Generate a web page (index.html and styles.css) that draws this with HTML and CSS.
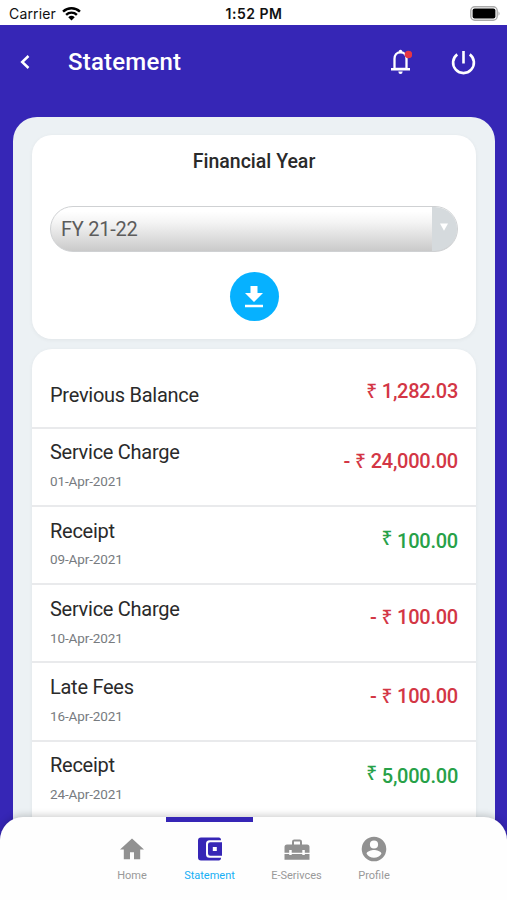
FILE: index.html
```
<!DOCTYPE html>
<html lang="en">
<head>
<meta charset="utf-8">
<title>Statement</title>
<link rel="stylesheet" href="styles.css">
</head>
<body>
<div class="status">
  <div class="carrier"><span>Carrier</span>
    <svg class="wifi" viewBox="0 0 18 14"><path d="M1 5.200a11.600 11.600 0 0 1 16 0M3.900 8.200a7.400 7.400 0 0 1 10.200 0" fill="none" stroke="#000" stroke-width="2.300"/><path d="M5.900 10.500a4.600 4.600 0 0 1 6.200 0L9 13.600z"/></svg>
  </div>
  <div class="time">1:52 PM</div>
  <svg class="battery" viewBox="0 0 31 15"><rect x=".8" y=".8" width="26.400" height="13.400" rx="4" fill="#fff" stroke="#aaa" stroke-width="1.400"/><rect x="2.600" y="2.600" width="22.800" height="9.800" rx="2"/><path d="M28.500 5.200q2.200 2.300 0 4.600z" fill="#aaa"/></svg>
</div>
<header class="header">
  <svg class="back" viewBox="0 0 10 16"><path d="M8.500 2 2.200 8l6.300 6" fill="none" stroke="#fff" stroke-width="2.500"/></svg>
  <h1>Statement</h1>
  <svg class="bell" viewBox="0 0 22 26"><path d="M10.500 3.300c-4 0-6 3-6 6.500v10h12v-10c0-3.500-2-6.500-6-6.500z" fill="none" stroke="#fff" stroke-width="2.300"/><path d="M8.700 3.200V2q1.800-2.700 3.600 0v1.200zM1 19h19v2.400H1zM8.300 22.500h4.400q-.2 2.500-2.200 2.500t-2.200-2.500z" fill="#fff"/><circle cx="18.500" cy="5.500" r="3.800" fill="#e63544"/></svg>
  <svg class="power" viewBox="0 0 24 24"><path d="M6 4.200a10 10 0 1 0 12 0M12 1v12" fill="none" stroke="#fff" stroke-width="2.500"/></svg>
</header>
<main class="sheet">
  <section class="card year">
    <h2>Financial Year</h2>
    <div class="select"><span>FY 21-22</span><div class="arrow"><svg viewBox="0 0 10 9"><path d="M1 .5h8L5 7.800z" fill="#fff"/></svg></div></div>
    <div class="download"><svg viewBox="0 0 18 22"><path d="M5.500 0h7v7H18l-9 9-9-9h5.500zM0 18.700h18v2.600H0z" fill="#fff"/></svg></div>
  </section>
  <section class="card list">
    <div class="row first"><div class="name">Previous Balance</div><div class="amount due"><span class="rs">₹</span>1,282.03</div></div>
    <div class="row"><div><div class="name">Service Charge</div><div class="date">01-Apr-2021</div></div><div class="amount due">-<span class="rs minus">₹</span>24,000.00</div></div>
    <div class="row"><div><div class="name">Receipt</div><div class="date">09-Apr-2021</div></div><div class="amount paid"><span class="rs">₹</span>100.00</div></div>
    <div class="row"><div><div class="name">Service Charge</div><div class="date">10-Apr-2021</div></div><div class="amount due">-<span class="rs minus">₹</span>100.00</div></div>
    <div class="row"><div><div class="name">Late Fees</div><div class="date">16-Apr-2021</div></div><div class="amount due">-<span class="rs minus">₹</span>100.00</div></div>
    <div class="row"><div><div class="name">Receipt</div><div class="date">24-Apr-2021</div></div><div class="amount paid"><span class="rs">₹</span>5,000.00</div></div>
  </section>
</main>
<nav class="nav">
  <div class="tab home"><svg viewBox="0 0 26 26"><path d="M13 2.500 1 13.400h3.800v9.900H11v-7h4v7h6.200v-9.900H25z"/></svg><span>Home</span></div>
  <div class="tab active"><svg viewBox="0 0 26 26"><path d="M4 1.500h17.800q2.200 0 2.200 2.700H12.500Q9 4.200 9 7.700v10.600q0 3.500 3.500 3.500H24q0 2.700-2.200 2.700H4q-3 0-3-3v-17q0-3 3-3z"/><path d="M13.300 6.300H25v13.400H13.300q-2.300 0-2.300-2.300V8.600q0-2.300 2.300-2.300zm2.500 4.700v4h4v-4z" fill-rule="evenodd"/></svg><span>Statement</span></div>
  <div class="tab"><svg viewBox="0 0 26 26"><path d="M3 8.500h5V5.800q0-2.300 2.300-2.300h5.400Q18 3.500 18 5.800v2.700h5q2.500 0 2.500 2.500v5.800h-4.700v-2.700h-2.500v2.700H7.700v-2.700H5.200v2.700H.5V11q0-2.500 2.500-2.500zm7 0h6V5.600h-6z" fill-rule="evenodd"/><path d="M.5 18h4.700v1h2.500v-1h10.600v1h2.500v-1h4.700v5.700H.5z"/></svg><span>E-Serivces</span></div>
  <div class="tab"><svg viewBox="0 0 26 26"><path d="M13 .7a12.300 12.300 0 1 0 0 24.600A12.300 12.300 0 1 0 13 .7zm0 3.700a4.100 4.100 0 1 1 0 8.200 4.100 4.100 0 1 1 0-8.200zm0 17.400c-3.200 0-5.800-1.600-7.400-4 .1-2.400 5-3.700 7.400-3.700s7.300 1.300 7.400 3.700c-1.600 2.400-4.200 4-7.400 4z" fill-rule="evenodd"/></svg><span>Profile</span></div>
</nav>
</body>
</html>
```
FILE: styles.css
```
* { box-sizing: border-box; }
body { margin: 0; width: 507px; height: 900px; overflow: hidden; background: #3626b6; font-family: Roboto, "Liberation Sans", sans-serif; color: #2a2a2a; display: flex; flex-direction: column; }
svg { display: block; flex: none; }
h1, h2 { margin: 0; font-weight: 500; }
.status { height: 25px; flex: none; background: #fff; display: grid; grid-template-columns: 1fr auto 1fr; align-items: center; padding: 2px 8px 0 9px; font-family: Inter, sans-serif; font-size: 14px; line-height: 20px; color: #111; }
.carrier { display: flex; align-items: center; gap: 6px; letter-spacing: .15px; }
.wifi { width: 19px; height: 15px; }
.time { font-weight: 600; letter-spacing: .5px; }
.battery { width: 31px; height: 15px; justify-self: end; margin-right: -2px; }
.header { height: 92px; flex: none; display: flex; align-items: center; padding: 0 31px 18px 20px; }
.back { width: 10px; height: 16px; }
h1 { color: #fff; font-size: 24px; line-height: 32px; letter-spacing: .2px; margin-left: 38px; flex: 1; }
.bell { width: 22px; height: 26px; margin-right: 39px; }
.power { width: 25px; height: 25px; }
.sheet { flex: 1; min-height: 0; margin: 0 12px 0 13px; padding: 18px 19px 0; border-radius: 24px 24px 0 0; background: #ecf1f4; overflow: hidden; }
.card { background: #fff; border-radius: 20px; box-shadow: 0 1px 4px rgba(0,0,0,.05); }
.year { height: 204px; padding: 14px 18px 0; display: flex; flex-direction: column; align-items: center; }
h2 { font-size: 19.5px; line-height: 25px; }
.select { width: 408px; height: 46px; margin-top: 32px; border: 1px solid #cfd1d3; border-radius: 23px; overflow: hidden; display: flex; align-items: center; justify-content: space-between; background: linear-gradient(#fff 10%, #f4f4f4 35%, #cacaca); color: #5c5c5c; font-size: 20px; letter-spacing: -.25px; padding-left: 10px; }
.arrow { width: 25px; height: 44px; background: #d5dadd; padding: 16px 0 0 7px; }
.arrow svg { width: 10px; height: 9px; }
.download { width: 49px; height: 49px; margin-top: 20px; border-radius: 50%; background: #06b1ff; display: flex; align-items: center; justify-content: center; }
.download svg { width: 18px; height: 22px; }
.list { height: 600px; margin-top: 10px; }
.row { height: 78.2px; padding: 9.7px 18px 0; display: flex; justify-content: space-between; border-bottom: 2px solid #e9eaec; }
.row.first { height: 79.8px; padding-top: 32px; }
.name { font-size: 20px; line-height: 28px; letter-spacing: -.27px; }
.date { font-size: 13.5px; line-height: 20px; letter-spacing: -.12px; margin-top: 4.8px; color: #777b80; }
.amount { font-size: 20px; font-weight: 500; line-height: 28px; letter-spacing: -.25px; padding-top: 8.5px; white-space: pre; }
.first .amount { padding-top: 0; margin-top: -4px; }
.due { color: #d33645; }
.paid { color: #27a148; padding-top: 10.5px; }
.rs { display: inline-block; font-family: "Noto Sans", sans-serif; font-size: 19px; line-height: 20px; margin-right: 5px; }
.minus { margin-left: 5px; }
.paid .rs { position: relative; top: -3px; }
.nav { position: absolute; left: 0; top: 817px; width: 507px; height: 83px; background: #fefefe; border-radius: 23px 23px 0 0; box-shadow: 0 -2px 7px rgba(0,0,0,.18); display: grid; grid-template-columns: 68px 87px 87px 68px; justify-content: start; padding-left: 98px; }
.tab { border-top: 5px solid transparent; padding-top: 14px; display: flex; flex-direction: column; align-items: center; color: #999; fill: #919191; font-size: 11px; line-height: 16px; }
.tab svg { width: 26px; height: 26px; }
.tab span { margin-top: 6px; }
.active { border-color: #3626b6; color: #16aff5; fill: #3626b6; }
```
